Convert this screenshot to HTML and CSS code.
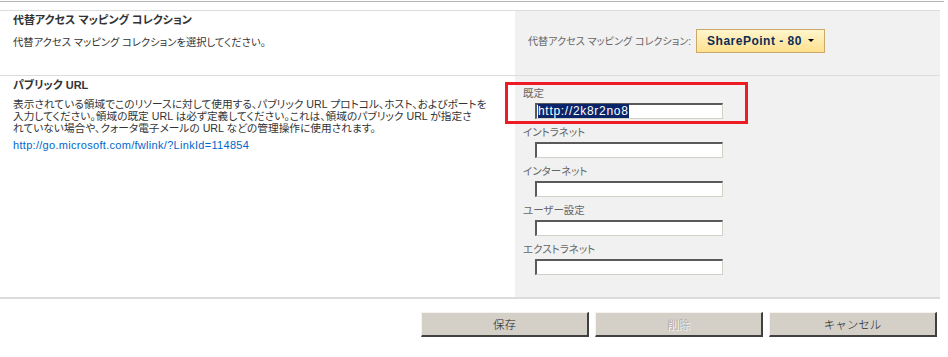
FILE: index.html
```html
<!DOCTYPE html>
<html lang="ja">
<head>
    <meta charset="UTF-8">
    <title>代替アクセス マッピング</title>
    <link rel="stylesheet" href="styles.css">
</head>
<body>
    <div class="page">
        <div class="topline"></div>

        <div class="rows">
            <div class="row">
                <div class="desc-cell">
                    <h3 class="section-title">代替アクセス マッピング コレクション</h3>
                    <p class="section-text">代替アクセス マッピング コレクションを選択してください。</p>
                </div>
                <div class="control-cell collection">
                    <span class="collection-label">代替アクセス マッピング コレクション:</span>
                    <div class="dropdown">SharePoint - 80 <span class="arrow"></span></div>
                </div>
            </div>

            <div class="row row-urls">
                <div class="desc-cell">
                    <h3 class="section-title">パブリック URL</h3>
                    <p class="section-text long">表示されている領域でこのリソースに対して使用する、パブリック URL プロトコル、ホスト、およびポートを<br>入力してください。領域の既定 URL は必ず定義してください。これは、領域のパブリック URL が指定さ<br>れていない場合や、クォータ電子メールの URL などの管理操作に使用されます。</p>
                    <a class="help-link" href="#">http://go.microsoft.com/fwlink/?LinkId=114854</a>
                </div>
                <div class="control-cell fields">
                    <div class="field">
                        <label>既定</label>
                        <div class="textbox"><span class="selected">http://2k8r2no8</span></div>
                    </div>
                    <div class="field">
                        <label>イントラネット</label>
                        <input type="text" class="textbox">
                    </div>
                    <div class="field">
                        <label>インターネット</label>
                        <input type="text" class="textbox">
                    </div>
                    <div class="field">
                        <label>ユーザー設定</label>
                        <input type="text" class="textbox">
                    </div>
                    <div class="field">
                        <label>エクストラネット</label>
                        <input type="text" class="textbox">
                    </div>
                </div>
            </div>
        </div>

        <div class="buttons">
            <button class="btn">保存</button>
            <button class="btn" disabled>削除</button>
            <button class="btn">キャンセル</button>
        </div>
    </div>

    <div class="highlight"></div>
</body>
</html>
```

FILE: styles.css
```css
body {
    margin: 0;
    background: #fff;
    font-family: 'Liberation Sans', 'Noto Sans CJK JP', sans-serif;
    font-size: 12px;
    color: #333;
    font-feature-settings: "palt";
}

.page {
    width: 944px;
}

.topline {
    height: 8px;
    margin-top: 1px;
    border-top: 1px solid #b4b4b4;
}

.rows {
    width: 940px;
    border-bottom: 2px solid #dcdcdc;
}

.row {
    display: grid;
    grid-template-columns: 515px 425px;
    border-top: 1px solid #dcdcdc;
    height: 64px;
}

.row-urls {
    height: 221px;
}

.desc-cell {
    padding: 2px 0 0 13px;
}

.section-title {
    margin: 0;
    font-size: 11px;
    line-height: 14px;
    font-weight: bold;
    color: #333;
}

.section-text {
    margin: 9px 0 0;
    font-size: 10.3px;
    line-height: 14px;
    color: #333;
}

.section-text.long {
    margin-top: 6px;
    font-size: 10.7px;
    line-height: 12px;
}

.help-link {
    display: block;
    margin-top: 5px;
    font-size: 11px;
    line-height: 12px;
    letter-spacing: 0.3px;
    color: #0066cc;
    text-decoration: none;
}

.control-cell {
    background: #f1f1f1;
}

.collection {
    display: flex;
    align-items: center;
    gap: 5px;
    padding: 0 0 5px 13px;
}

.collection-label {
    color: #666;
    font-size: 10.1px;
}

.dropdown {
    display: flex;
    align-items: center;
    gap: 6px;
    height: 22px;
    padding: 0 10px;
    border: 1px solid #caa96b;
    background: linear-gradient(#fff5cc, #ffe08e);
    color: #0c2d56;
    font-weight: bold;
    font-size: 12px;
    letter-spacing: 0.5px;
}

.arrow {
    width: 0;
    height: 0;
    border-left: 3px solid transparent;
    border-right: 3px solid transparent;
    border-top: 3px solid #000;
}

.fields {
    padding: 10px 0 0 8px;
}

.field label {
    display: block;
    line-height: 14px;
    font-size: 10.5px;
    color: #666;
}

.textbox {
    display: block;
    box-sizing: border-box;
    width: 188px;
    height: 16px;
    margin: 3px 0 6px 12px;
    padding: 0 1px;
    background: #fff;
    border-top: 2px solid #5a5a5a;
    border-left: 2px solid #5a5a5a;
    border-bottom: 1px solid #d4d0c8;
    border-right: 1px solid #d4d0c8;
    font: 12px 'Liberation Sans', sans-serif;
    line-height: 13px;
}

.selected {
    background: #0a246a;
    color: #fff;
    letter-spacing: 0.7px;
}

.buttons {
    width: 940px;
    box-sizing: border-box;
    display: flex;
    justify-content: flex-end;
    gap: 6px;
    padding: 13px 3px 0 0;
}

.btn {
    width: 168px;
    height: 25px;
    background: #d4d0c8;
    border-top: 1px solid #f4f3ef;
    border-left: 1px solid #f4f3ef;
    border-bottom: 2px solid #404040;
    border-right: 2px solid #404040;
    font-family: 'Noto Sans CJK JP', sans-serif;
    font-size: 11.5px;
    font-weight: 300;
    color: #222;
    padding: 0;
}

.btn:disabled {
    color: #a3a19b;
    text-shadow: 1px 1px 0 #fff;
}

/* annotation drawn over the screenshot */
.highlight {
    position: absolute;
    left: 505px;
    top: 82px;
    width: 237px;
    height: 36px;
    border: 3px solid #ed1c24;
}
```
